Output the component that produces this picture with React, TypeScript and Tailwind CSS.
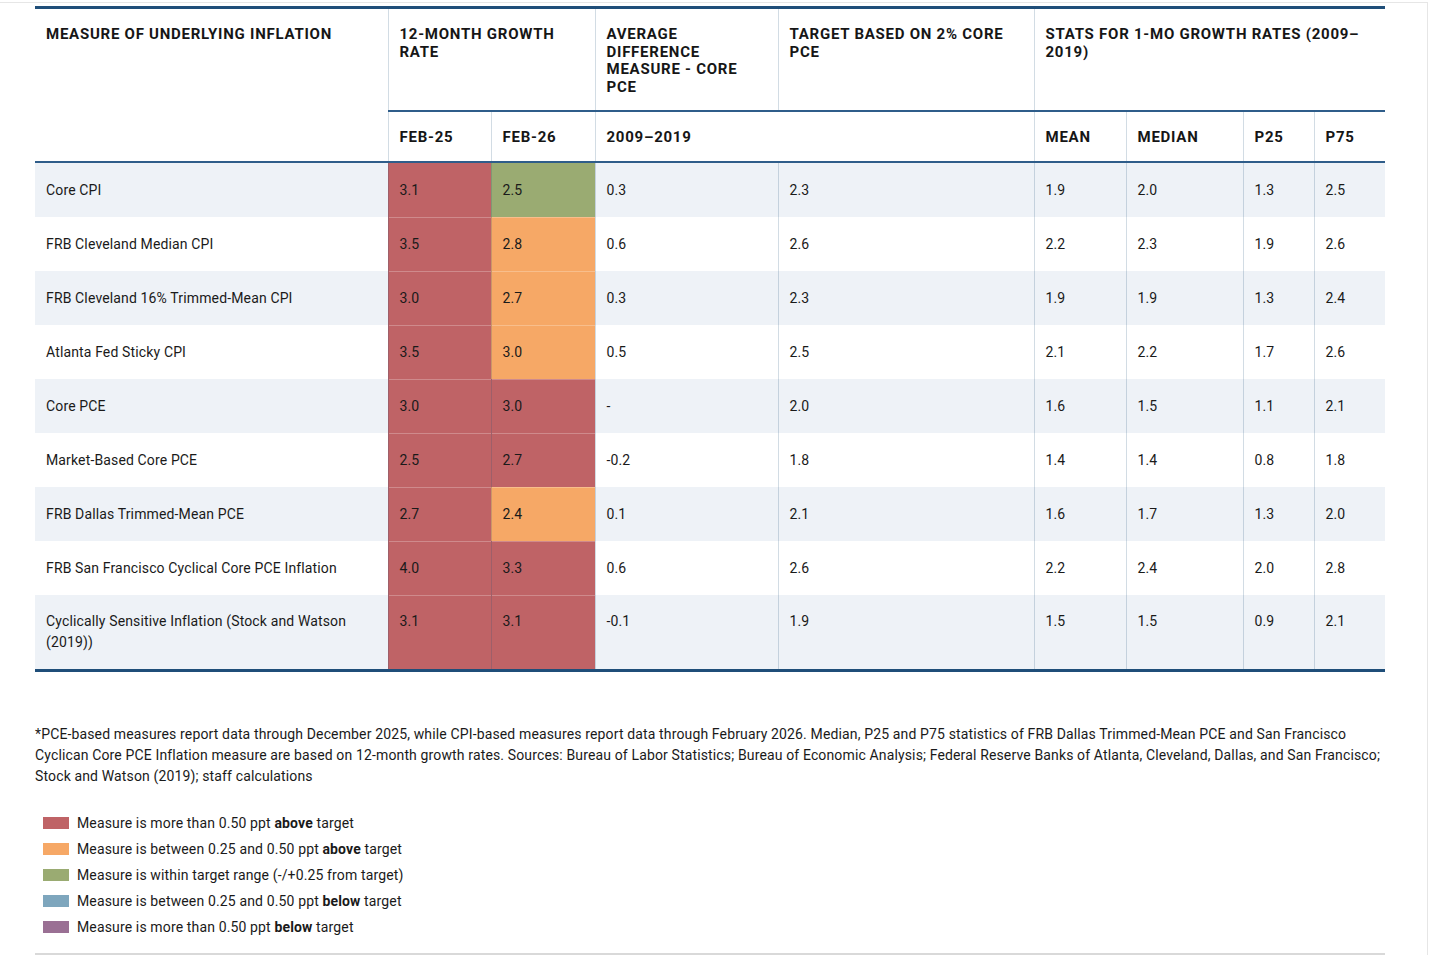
import React from 'react'

type Tone = 'red' | 'orange' | 'green'

interface MeasureRow {
  name: string
  feb25: string
  feb26: string
  avgDiff: string
  target: string
  mean: string
  median: string
  p25: string
  p75: string
  tone25: Tone
  tone26: Tone
}

const TONE_BG: Record<Tone, string> = {
  red: 'bg-[#bf6366]',
  orange: 'bg-[#f6a866]',
  green: 'bg-[#9aab72]',
}

const ROWS: MeasureRow[] = [
  { name: 'Core CPI', feb25: '3.1', feb26: '2.5', avgDiff: '0.3', target: '2.3', mean: '1.9', median: '2.0', p25: '1.3', p75: '2.5', tone25: 'red', tone26: 'green' },
  { name: 'FRB Cleveland Median CPI', feb25: '3.5', feb26: '2.8', avgDiff: '0.6', target: '2.6', mean: '2.2', median: '2.3', p25: '1.9', p75: '2.6', tone25: 'red', tone26: 'orange' },
  { name: 'FRB Cleveland 16% Trimmed-Mean CPI', feb25: '3.0', feb26: '2.7', avgDiff: '0.3', target: '2.3', mean: '1.9', median: '1.9', p25: '1.3', p75: '2.4', tone25: 'red', tone26: 'orange' },
  { name: 'Atlanta Fed Sticky CPI', feb25: '3.5', feb26: '3.0', avgDiff: '0.5', target: '2.5', mean: '2.1', median: '2.2', p25: '1.7', p75: '2.6', tone25: 'red', tone26: 'orange' },
  { name: 'Core PCE', feb25: '3.0', feb26: '3.0', avgDiff: '-', target: '2.0', mean: '1.6', median: '1.5', p25: '1.1', p75: '2.1', tone25: 'red', tone26: 'red' },
  { name: 'Market-Based Core PCE', feb25: '2.5', feb26: '2.7', avgDiff: '-0.2', target: '1.8', mean: '1.4', median: '1.4', p25: '0.8', p75: '1.8', tone25: 'red', tone26: 'red' },
  { name: 'FRB Dallas Trimmed-Mean PCE', feb25: '2.7', feb26: '2.4', avgDiff: '0.1', target: '2.1', mean: '1.6', median: '1.7', p25: '1.3', p75: '2.0', tone25: 'red', tone26: 'orange' },
  { name: 'FRB San Francisco Cyclical Core PCE Inflation', feb25: '4.0', feb26: '3.3', avgDiff: '0.6', target: '2.6', mean: '2.2', median: '2.4', p25: '2.0', p75: '2.8', tone25: 'red', tone26: 'red' },
  { name: 'Cyclically Sensitive Inflation (Stock and Watson (2019))', feb25: '3.1', feb26: '3.1', avgDiff: '-0.1', target: '1.9', mean: '1.5', median: '1.5', p25: '0.9', p75: '2.1', tone25: 'red', tone26: 'red' },
]

const LEGEND: { swatch: string; pre: string; bold?: string; post?: string }[] = [
  { swatch: 'bg-[#bf6366]', pre: 'Measure is more than 0.50 ppt ', bold: 'above', post: ' target' },
  { swatch: 'bg-[#f6a866]', pre: 'Measure is between 0.25 and 0.50 ppt ', bold: 'above', post: ' target' },
  { swatch: 'bg-[#9aab72]', pre: 'Measure is within target range (-/+0.25 from target)' },
  { swatch: 'bg-[#7ea6bd]', pre: 'Measure is between 0.25 and 0.50 ppt ', bold: 'below', post: ' target' },
  { swatch: 'bg-[#9a7094]', pre: 'Measure is more than 0.50 ppt ', bold: 'below', post: ' target' },
]

// shared cell classes
const th = 'px-[11px] text-left align-top font-bold uppercase tracking-[0.05em] text-[15px] text-[#161616]'
const hline = 'border-b-2 border-b-[#2f5d8a]'
const vline = 'border-l border-[#1f4e79]/20'
const td = 'px-[11px] align-top text-[14px] leading-[21px] tracking-[0.01em]'

export default function App() {
  return (
    <div className="min-h-screen bg-white pt-[2px] font-['Roboto',sans-serif] text-[#1a1a1a]">
      <div className="w-[1428px] border-t border-r border-[#e6e6e6] pl-[35px] pt-[3px] pb-[1px]">
        <div className="w-[1350px]">
          <table className="w-full table-fixed border-collapse border-t-[3px] border-b-[3px] border-[#1f4e79]">
            <colgroup>
              <col className="w-[353px]" />
              <col className="w-[103px]" />
              <col className="w-[104px]" />
              <col className="w-[183px]" />
              <col className="w-[256px]" />
              <col className="w-[92px]" />
              <col className="w-[117px]" />
              <col className="w-[71px]" />
              <col className="w-[71px]" />
            </colgroup>
            <thead>
              <tr className="leading-[17.5px]">
                <th rowSpan={2} className={`${th} pt-[17px] ${hline}`}>
                  Measure of Underlying Inflation
                </th>
                <th colSpan={2} className={`${th} ${vline} pt-[17px] pb-[14px] ${hline}`}>
                  12-Month Growth
                  <br />
                  Rate
                </th>
                <th className={`${th} ${vline} pt-[17px] pb-[14px] ${hline}`}>
                  Average
                  <br />
                  Difference
                  <br />
                  Measure - Core
                  <br />
                  PCE
                </th>
                <th className={`${th} ${vline} pt-[17px] pb-[14px] ${hline}`}>
                  Target Based on 2% Core
                  <br />
                  PCE
                </th>
                <th colSpan={4} className={`${th} ${vline} pt-[17px] pb-[14px] ${hline}`}>
                  Stats for 1-Mo Growth Rates (2009–
                  <br />
                  2019)
                </th>
              </tr>
              <tr className="leading-[17px]">
                <th className={`${th} ${vline} pt-[17px] pb-[15px] ${hline}`}>Feb-25</th>
                <th className={`${th} ${vline} pt-[17px] pb-[15px] ${hline}`}>Feb-26</th>
                <th colSpan={2} className={`${th} ${vline} pt-[17px] pb-[15px] ${hline}`}>2009–2019</th>
                <th className={`${th} ${vline} pt-[17px] pb-[15px] ${hline}`}>Mean</th>
                <th className={`${th} ${vline} pt-[17px] pb-[15px] ${hline}`}>Median</th>
                <th className={`${th} ${vline} pt-[17px] pb-[15px] ${hline}`}>P25</th>
                <th className={`${th} ${vline} pt-[17px] pb-[15px] ${hline}`}>P75</th>
              </tr>
            </thead>
            <tbody>
              {ROWS.map((r, i) => {
                const sep = i > 0 ? 'shadow-[inset_0_1px_0_rgba(255,255,255,0.25)]' : ''
                const pad = i === ROWS.length - 1 ? 'py-4' : 'pt-[17px] pb-4'
                const cell = `${td} ${pad}`
                return (
                  <tr key={r.name} className={i % 2 === 0 ? 'bg-[#eef2f7]' : 'bg-white'}>
                    <td className={cell}>{r.name}</td>
                    <td className={`${cell} ${vline} ${TONE_BG[r.tone25]} ${sep}`}>{r.feb25}</td>
                    <td className={`${cell} ${vline} ${TONE_BG[r.tone26]} ${sep}`}>{r.feb26}</td>
                    <td className={`${cell} ${vline}`}>{r.avgDiff}</td>
                    <td className={`${cell} ${vline}`}>{r.target}</td>
                    <td className={`${cell} ${vline}`}>{r.mean}</td>
                    <td className={`${cell} ${vline}`}>{r.median}</td>
                    <td className={`${cell} ${vline}`}>{r.p25}</td>
                    <td className={`${cell} ${vline}`}>{r.p75}</td>
                  </tr>
                )
              })}
            </tbody>
          </table>

          {/* Footnote */}
          <p className="mt-[52px] text-[14px] leading-[21px] tracking-[0.01em] whitespace-nowrap">
            *PCE-based measures report data through December 2025, while CPI-based measures report data through February 2026. Median, P25 and P75 statistics of FRB Dallas Trimmed-Mean PCE and San Francisco
            <br />
            Cyclican Core PCE Inflation measure are based on 12-month growth rates. Sources: Bureau of Labor Statistics; Bureau of Economic Analysis; Federal Reserve Banks of Atlanta, Cleveland, Dallas, and San Francisco;
            <br />
            Stock and Watson (2019); staff calculations
          </p>

          {/* Legend */}
          <ul className="mt-[23px] flex flex-col">
            {LEGEND.map((l) => (
              <li key={l.swatch} className="flex h-[26px] items-center gap-2 pl-2 text-[14px] tracking-[0.01em]">
                <span className={`h-[12px] w-[26px] shrink-0 ${l.swatch}`} />
                <span>
                  {l.pre}
                  {l.bold && <b className="font-bold">{l.bold}</b>}
                  {l.post}
                </span>
              </li>
            ))}
          </ul>

          <div className="mt-[13px] h-[2px] bg-[#d9d9d9]" />
        </div>
      </div>
    </div>
  )
}
